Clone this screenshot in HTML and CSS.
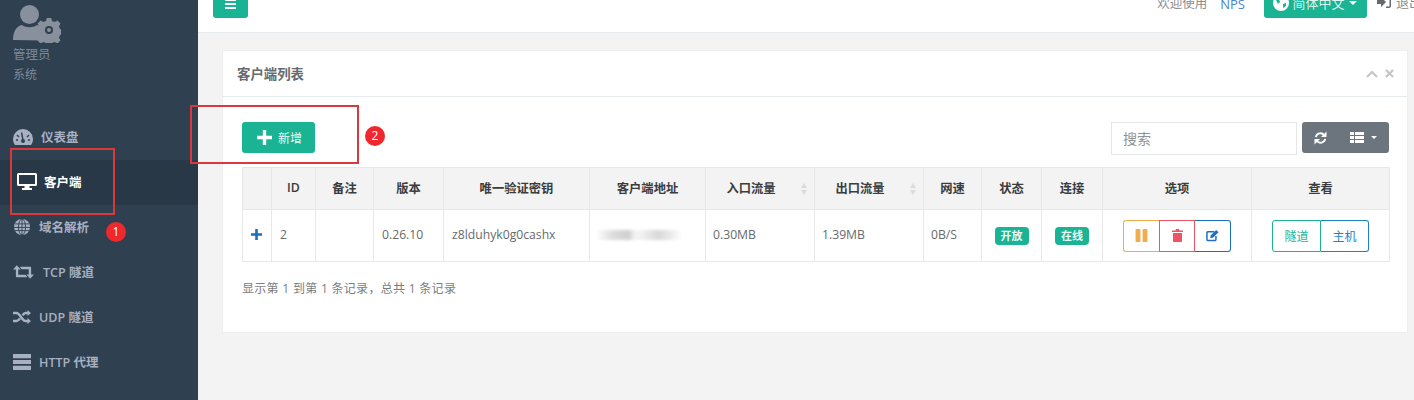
FILE: index.html
```html
<!DOCTYPE html>
<html lang="zh-CN">
<head>
<meta charset="utf-8">
<title>客户端列表</title>
<link rel="stylesheet" href="styles.css">
</head>
<body>
<div class="app">
  <aside class="sidebar">
    <div class="profile">
      <svg class="avatar" viewBox="0 0 48 40" fill="#87909c">
        <circle cx="16.500" cy="11.500" r="9.500"/>
        <path d="M0 37c0-9 4-14 9-15 4 3 11 3 15 0 2 .5 3 1 4.500 2.500-2 5-1 9 2 13z"/>
        <g transform="translate(36 27)"><path d="M-2.200-12h4.400l.8 3 2.600 1.100 2.800-1.600 3.100 3.100-1.600 2.800 1.100 2.600 3 .8v4.400l-3 .8-1.100 2.600 1.600 2.800-3.100 3.100-2.800-1.600-2.600 1.100-.8 3h-4.400l-.8-3-2.600-1.100-2.800 1.600-3.100-3.100 1.600-2.800-1.100-2.600-3-.8v-4.400l3-.8 1.100-2.600-1.600-2.800 3.100-3.100 2.800 1.600 2.600-1.100z"/><circle r="4" fill="#2f4050"/><circle r="2" fill="#87909c"/></g>
      </svg>
      <div class="profile-name">管理员</div>
      <div class="profile-role">系统</div>
    </div>
    <nav class="menu">
      <a class="menu-item"><svg class="ico" viewBox="0 0 20 16" fill="#a7b1c2"><path d="M10 0a10 10 0 0 0-10 10c0 2.400.8 4.500 2 6h16c1.200-1.500 2-3.600 2-6a10 10 0 0 0-10-10z"/><path d="M10 11 8.500 3.500M4 6l2 2M3 11h2M16 6l-2 2M17 11h-2" stroke="#2f4050" stroke-width="1.400"/><circle cx="10" cy="12" r="2" fill="#2f4050"/></svg><span>仪表盘</span></a>
      <a class="menu-item active"><svg class="ico" viewBox="0 0 20 17" fill="#fff"><path d="M1.500 0h17A1.500 1.500 0 0 1 20 1.500v10a1.500 1.500 0 0 1-1.500 1.500h-6v2h2.500v2H5v-2h2.500v-2h-6A1.500 1.500 0 0 1 0 11.500v-10A1.500 1.500 0 0 1 1.500 0zM2 2v9h16V2z"/></svg><span>客户端</span></a>
      <a class="menu-item"><svg class="ico ico-narrow" viewBox="0 0 18 18" fill="none" stroke="#2f4050" stroke-width="1"><circle cx="9" cy="9" r="9" fill="#a7b1c2" stroke="none"/><ellipse cx="9" cy="9" rx="4" ry="9"/><path d="M9 0v18M1 5.500h16M0 9.500h18M1 13h16"/></svg><span>域名解析</span></a>
      <a class="menu-item"><svg class="ico ico-wide" viewBox="0 0 22 14" fill="#a7b1c2"><path d="M4 0l4 4.500H5.500V10H13l2 2.500H4c-.6 0-1-.4-1-1V4.500H0zM7 1.500h11c.6 0 1 .4 1 1v7h3L18 14l-4-4.500h2.500V4H9z"/></svg><span>TCP 隧道</span></a>
      <a class="menu-item"><svg class="ico ico-narrow" viewBox="0 0 18 14" fill="none" stroke="#a7b1c2" stroke-width="2.400"><path d="M0 3h3.500c3.500 0 5.500 8 9 8H16M0 11h3.500C5 11 6 9.800 7 8.500M9.500 5.300C10.500 4 11.300 3 12.500 3H16"/><path d="M14.500 0 18 3l-3.500 3zM14.500 8 18 11l-3.500 3z" fill="#a7b1c2" stroke="none"/></svg><span>UDP 隧道</span></a>
      <a class="menu-item"><svg class="ico ico-narrow" viewBox="0 0 17 15" fill="#a7b1c2"><path d="M0 0h17v4H0zM0 5.500h17v4H0zM0 11h17v4H0z"/></svg><span>HTTP 代理</span></a>
      <a class="menu-item"><svg class="ico" viewBox="0 0 17 15" fill="#a7b1c2"><circle cx="8.500" cy="7" r="6"/></svg></a>
    </nav>
  </aside>
  <main class="main">
    <header class="topbar">
      <button class="menu-toggle" aria-label="菜单"><svg viewBox="0 0 11 10" fill="#fff"><path d="M0 0h11v2H0zM0 4h11v2H0zM0 8h11v2H0z"/></svg></button>
      <div class="topbar-right">
        <span class="welcome">欢迎使用</span>
        <a class="brand-link">NPS</a>
        <button class="lang"><svg viewBox="0 0 16 16"><circle cx="8" cy="8" r="8" fill="#fff"/><path d="M3 5l3-1 1 3-2 2zM10 9l3-1v3l-3 2z" fill="#1ab394"/></svg>简体中文<i class="caret"></i></button>
        <a class="logout"><svg viewBox="0 0 14 12" fill="#676a6c"><path d="M0 4h4V1l5 5-5 5V8H0zM9 0h3c1 0 2 1 2 2v8c0 1-1 2-2 2H9v-1.500h3c.3 0 .5-.2.500-.5V2c0-.3-.2-.5-.5-.5H9z"/></svg>退出</a>
      </div>
    </header>
    <section class="content">
      <div class="card">
        <div class="card-title">
          <h5>客户端列表</h5>
          <div class="card-tools">
            <svg viewBox="0 0 12 8" fill="none" stroke="#c4c6c8" stroke-width="2.200"><path d="M1 7l5-5 5 5"/></svg>
            <svg viewBox="0 0 10 10" fill="none" stroke="#c4c6c8" stroke-width="2.400"><path d="M1 1l8 8M9 1l-8 8"/></svg>
          </div>
        </div>
        <div class="card-body">
          <div class="toolbar">
            <button class="btn-add"><svg viewBox="0 0 15 15" fill="#fff"><path d="M5.800 0h3.400v5.800H15v3.400H9.200V15H5.800V9.200H0V5.800h5.800z"/></svg>新增</button>
            <div class="toolbar-right">
              <input class="search" placeholder="搜索">
              <div class="tool-group">
                <svg class="tool-refresh" viewBox="0 0 14 14" fill="none" stroke="#fff" stroke-width="2"><path d="M2 6a5 5 0 0 1 9-2M12 8a5 5 0 0 1-9 2"/><path d="M13.500 0v6h-6zM.5 14V8h6z" fill="#fff" stroke="none"/></svg>
                <svg class="tool-list" viewBox="0 0 14 11" fill="#fff"><path d="M0 0h14v3H0zM0 4h14v3H0zM0 8h14v3H0z"/><path d="M4.500 0v11" stroke="#6c757d"/></svg>
                <i class="caret caret-small"></i>
              </div>
            </div>
          </div>
          <table class="grid">
            <colgroup>
              <col class="c1"><col class="c2"><col class="c3"><col class="c4"><col class="c5"><col class="c6"><col class="c7"><col class="c8"><col class="c9"><col class="c10"><col class="c11"><col class="c12"><col class="c13">
            </colgroup>
            <thead>
              <tr>
                <th></th><th>ID</th><th>备注</th><th>版本</th><th>唯一验证密钥</th><th>客户端地址</th>
                <th class="sortable">入口流量<i class="sort"></i></th>
                <th class="sortable">出口流量<i class="sort"></i></th>
                <th>网速</th><th>状态</th><th>连接</th><th>选项</th><th>查看</th>
              </tr>
            </thead>
            <tbody>
              <tr>
                <td class="expand"><svg viewBox="0 0 11 11" fill="#1c6fc0"><path d="M4.200 0h2.600v4.200H11v2.600H6.800V11H4.200V6.800H0V4.200h4.200z"/></svg></td>
                <td>2</td><td></td><td>0.26.10</td><td>z8lduhyk0g0cashx</td>
                <td><span class="redacted"></span></td>
                <td class="tight">0.30MB</td><td class="tight">1.39MB</td><td class="tight">0B/S</td>
                <td class="center"><span class="badge">开放</span></td>
                <td class="center"><span class="badge">在线</span></td>
                <td class="center">
                  <div class="btn-row">
                    <button class="act act-warn"><svg viewBox="0 0 11 12" fill="#f0ad4e"><path d="M0 1c0-.6.400-1 1-1h2.500c.6 0 1 .4 1 1v10c0 .6-.4 1-1 1H1c-.6 0-1-.4-1-1zM6.500 1c0-.6.400-1 1-1H10c.6 0 1 .4 1 1v10c0 .6-.4 1-1 1H7.500c-.6 0-1-.4-1-1z"/></svg></button>
                    <button class="act act-del"><svg viewBox="0 0 11 13" fill="#ed5565"><path d="M0 1.500h3.500L4 0h3l.5 1.500H11V3H0zM1 4h9v8c0 .6-.4 1-1 1H2c-.6 0-1-.4-1-1z"/></svg></button>
                    <button class="act act-edit"><svg viewBox="0 0 14 13" fill="none" stroke="#1c6fc0"><path d="M9 2.500H2A1.200 1.200 0 0 0 1 3.700v7.100A1.200 1.200 0 0 0 2 12h7.500a1.200 1.200 0 0 0 1.200-1.200V7" stroke-width="1.600"/><path d="M4.500 9.300l.5-2.800L11 .5l2.500 2.500-6 6z" fill="#1c6fc0" stroke="none"/></svg></button>
                  </div>
                </td>
                <td class="center">
                  <div class="btn-row">
                    <button class="view view-a">隧道</button>
                    <button class="view view-b">主机</button>
                  </div>
                </td>
              </tr>
            </tbody>
          </table>
          <p class="summary">显示第 1 到第 1 条记录，总共 1 条记录</p>
        </div>
      </div>
    </section>
  </main>
</div>
<div class="mark mark-a"></div>
<div class="mark mark-b"></div>
<span class="pin pin-a">1</span>
<span class="pin pin-b">2</span>
</body>
</html>
```
FILE: styles.css
```css
* { box-sizing: border-box; }
html, body { margin: 0; height: 100%; overflow: hidden; }
body {
  font-family: "Open Sans", "Noto Sans CJK SC", sans-serif;
  font-size: 13px;
  color: #676a6c;
  background: #f3f3f4;
}
button { font-family: inherit; cursor: pointer; }
.app { display: flex; height: 400px; overflow: hidden; }

/* sidebar */
.sidebar { width: 198px; flex: none; background: #2f4050; color: #a7b1c2; }
.profile { height: 115px; padding: 3px 0 0 13px; }
.avatar { display: block; width: 48px; height: 40px; }
.profile-name { margin-top: 2px; font-size: 12.500px; line-height: 20px; color: #7d8a99; }
.profile-role { font-size: 12px; line-height: 18px; margin-top: 1px; color: #7d8a99; }
.menu-item {
  display: flex;
  align-items: center;
  height: 45px;
  padding: 0 0 2px 13px;
  font-size: 12.500px;
  font-weight: 600;
  color: #a7b1c2;
}
.menu-item .ico { width: 20px; height: 16px; flex: none; margin-right: 8px; }
.menu-item .ico-narrow { width: 18px; }
.menu-item .ico-wide { width: 21px; height: 14px; margin-right: 9px; }
.menu-item.active { background: #293846; color: #fff; padding-left: 17px; }
.menu-item.active .ico { margin-right: 7px; height: 17px; }

/* top bar */
.main { flex: 1; min-width: 0; }
.topbar {
  display: flex;
  justify-content: space-between;
  align-items: flex-end;
  height: 33px;
  padding: 0 0 14px 15px;
  background: #fff;
  border-bottom: 1px solid #e7eaec;
}
.menu-toggle {
  display: flex;
  align-items: flex-end;
  justify-content: center;
  width: 35px;
  height: 30px;
  margin-top: -11px;
  padding: 0 0 9px;
  border: 0;
  border-radius: 3px;
  background: #1ab394;
}
.menu-toggle svg { width: 11px; height: 10px; }
.topbar-right {
  display: flex;
  align-items: flex-end;
  margin-right: -8px;
  line-height: 18px;
  white-space: nowrap;
}
.welcome { font-size: 12.500px; color: #8b8d8f; margin-right: 13px; margin-bottom: 5px; }
.brand-link { font-size: 13px; color: #4a86c5; margin-right: 19px; margin-bottom: 5px; }
.lang {
  display: flex;
  align-items: center;
  justify-content: center;
  gap: 3px;
  width: 103px;
  height: 30px;
  margin-right: 10px;
  padding: 0;
  border: 0;
  border-radius: 3px;
  background: #1ab394;
  color: #d9f5ee;
  font-size: 13px;
  line-height: 18px;
}
.lang svg { width: 16px; height: 16px; }
.caret {
  display: inline-block;
  margin-left: 2px;
  border-top: 4px solid #fff;
  border-left: 4px solid transparent;
  border-right: 4px solid transparent;
}
.logout { display: flex; align-items: center; gap: 5px; font-size: 13px; color: #8b8d8f; margin-bottom: 7px; }
.logout svg { width: 14px; height: 12px; }

/* card */
.content { padding: 17px 6px 0 24px; }
.card { height: 283px; background: #fff; border: 1px solid #eeeeef; border-top-color: #f0f0f1; }
.card-title {
  display: flex;
  justify-content: space-between;
  align-items: center;
  height: 46px;
  padding: 0 13px 2px 14px;
  border-bottom: 1px solid #e7eaec;
}
.card-title h5 { margin: 0; font-size: 13.400px; font-weight: 600; color: #676a6c; }
.card-tools { display: flex; align-items: center; gap: 7px; margin-top: 2px; }
.card-tools svg:first-child { width: 12px; height: 8px; }
.card-tools svg:last-child { width: 9px; height: 9px; }
.card-body { padding: 25px 18px 0 19px; }
.toolbar { display: flex; justify-content: space-between; align-items: flex-start; height: 45px; }
.btn-add {
  display: flex;
  align-items: center;
  justify-content: center;
  gap: 6px;
  width: 73px;
  height: 31px;
  padding: 0 0 0 2px;
  border: 0;
  border-radius: 3px;
  background: #1ab394;
  color: #e8f8f4;
  font-size: 12px;
}
.btn-add svg { width: 15px; height: 15px; }
.toolbar-right { display: flex; align-items: flex-start; gap: 5px; }
.search {
  width: 186px;
  height: 33px;
  padding: 0 11px;
  border: 1px solid #e5e6e7;
  background: #fff;
  font-family: inherit;
  font-size: 14px;
  outline: 0;
}
.search::placeholder { color: #8f9193; opacity: 1; }
.tool-group {
  display: flex;
  align-items: center;
  width: 87px;
  height: 31px;
  padding-left: 12px;
  border-radius: 3px;
  background: #6c757d;
}
.tool-refresh { width: 13px; height: 14px; margin-right: 23px; }
.tool-list { width: 14px; height: 11px; margin-right: 5px; }
.caret-small { border-top-width: 3px; border-left-width: 3px; border-right-width: 3px; }

/* table */
.grid { width: 1147px; border-collapse: collapse; table-layout: fixed; font-size: 12.200px; }
.c1 { width: 29px; } .c2 { width: 44px; } .c3 { width: 58px; } .c4 { width: 70px; }
.c5 { width: 146px; } .c6 { width: 116px; } .c7 { width: 109px; } .c8 { width: 109px; }
.c9 { width: 58px; } .c10 { width: 60px; } .c11 { width: 61px; } .c12 { width: 149px; } .c13 { width: 138px; }
.grid th, .grid td { border: 1px solid #e7e7e7; padding: 0 8px; }
.grid th {
  position: relative;
  height: 42px;
  padding-bottom: 2px;
  background: #f3f3f3;
  text-align: center;
  font-size: 12.300px;
  font-weight: 600;
  color: #3a3c3f;
}
.grid th.sortable { padding-right: 26px; }
.sort {
  position: absolute;
  right: 7px;
  top: 15px;
  border-left: 3px solid transparent;
  border-right: 3px solid transparent;
  border-bottom: 5px solid #dcdcdc;
}
.sort::after {
  content: "";
  position: absolute;
  left: -3px;
  top: 7px;
  border-left: 3px solid transparent;
  border-right: 3px solid transparent;
  border-top: 5px solid #dcdcdc;
}
.grid td { height: 52px; padding-bottom: 2px; color: #676a6c; }
.grid td.tight { padding-left: 7px; }
.grid td.center { text-align: center; padding: 0; }
.grid td.expand { padding: 0 0 2px 8px; }
.expand svg { display: block; width: 11px; height: 11px; }
.redacted {
  display: block;
  width: 86px;
  height: 10px;
  margin-left: -2px;
  filter: blur(1.500px);
  background: linear-gradient(90deg, #fff, #dedede 18%, #cfcfcf 38%, #f2f2f2 45%, #f2f2f2 52%, #d8d8d8 72%, #e8e8e8 85%, #fff);
}
.badge {
  display: inline-block;
  width: 34px;
  height: 18px;
  border-radius: 4px;
  background: #1ab394;
  color: #e8f8f4;
  font-size: 11px;
  font-weight: 600;
  line-height: 18px;
}
.btn-row { display: inline-flex; vertical-align: middle; }
.act, .view {
  height: 32px;
  margin: 0;
  padding: 0;
  background: #fff;
  border: 1px solid;
  font-size: 12px;
  display: flex;
  align-items: center;
  justify-content: center;
}
.act { width: 36px; }
.act svg { height: 13px; width: 13px; }
.act-warn { border-color: #f0ad4e; border-radius: 3px 0 0 3px; border-right: 0; }
.act-del { border-color: #ed5565; }
.act-edit { border-color: #1c6fc0; border-left: 0; border-radius: 0 3px 3px 0; }
.view { width: 49px; }
.view-a { border-color: #1ab394; color: #1ab394; border-radius: 3px 0 0 3px; }
.view-b { width: 48px; border-color: #1c84c6; color: #1c84c6; border-left: 0; border-radius: 0 3px 3px 0; }
.summary { margin: 18px 0 0; font-size: 12px; line-height: 18px; letter-spacing: .3px; color: #7b7d7f; }

/* annotations */
.mark { position: absolute; border: 2px solid #d9383c; }
.mark-a { left: 10px; top: 148px; width: 105px; height: 67px; }
.mark-b { left: 190px; top: 105px; width: 169px; height: 59px; }
.pin {
  position: absolute;
  width: 20px;
  height: 20px;
  border-radius: 50%;
  background: #f0282d;
  color: #fff;
  font-size: 12px;
  line-height: 20px;
  text-align: center;
}
.pin-a { left: 106px; top: 222px; }
.pin-b { left: 365px; top: 126px; }
```
